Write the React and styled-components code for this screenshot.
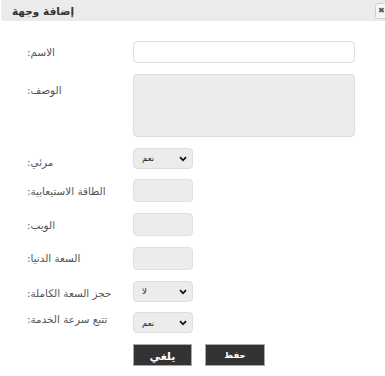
import React from "react";
import styled, { createGlobalStyle } from "styled-components";

const GlobalStyle = createGlobalStyle`
  html, body {
    margin: 0;
    padding: 0;
    background: #fff;
  }
  body {
    font-family: "DejaVu Sans", Tahoma, sans-serif;
    font-size: 11px;
    color: #555;
  }
`;

const Dialog = styled.div`
  width: 385px;
  height: 376px;
  overflow: hidden;
`;

const TitleBar = styled.div`
  height: 21px;
  margin-left: 1px;
  background: #ebebeb;
  border-bottom-left-radius: 4px;
  display: flex;
  align-items: center;
  justify-content: space-between;
  padding-left: 11px;
`;

const Title = styled.span`
  font-size: 10.5px;
  font-weight: bold;
  color: #333;
`;

const CloseBox = styled.button`
  width: 14px;
  height: 16px;
  margin-right: -4px;
  padding: 0 0 0 2px;
  border: 1px solid #cfcfcf;
  border-radius: 3px;
  background: #f6f6f6;
  color: #555;
  font-size: 8px;
  line-height: 14px;
  text-align: left;
  overflow: hidden;
`;

const Form = styled.div`
  display: grid;
  grid-template-columns: 106px 222px;
  row-gap: 10.75px;
  padding: 20px 0 0 27px;
`;

const Label = styled.div`
  display: flex;
  direction: ltr;
  justify-self: start;
  align-self: ${(p) => (p.$top ? "start" : "center")};
  padding-top: ${(p) => p.$offset || 0}px;
  font-size: 10.4px;
  color: #555;
  white-space: nowrap;
`;

const LabelText = styled.span`
  direction: rtl;
  unicode-bidi: isolate;
`;

const TextInput = styled.input`
  box-sizing: border-box;
  width: ${(p) => (p.$wide ? "222px" : "60px")};
  height: ${(p) => p.$h || 23}px;
  border: 1px solid ${(p) => (p.$wide ? "#dcdcdc" : "#e0e0e0")};
  border-radius: 4px;
  background: ${(p) => (p.$wide ? "#fff" : "#ececec")};
  margin: 0;
  outline: none;
`;

const TextArea = styled.textarea`
  box-sizing: border-box;
  width: 222px;
  height: 63px;
  border: 1px solid #dedede;
  border-radius: 4px;
  background: #ececec;
  margin: 0;
  resize: none;
  outline: none;
`;

const SelectWrap = styled.div`
  position: relative;
  width: 60px;
  height: 21px;
`;

const Select = styled.select`
  appearance: none;
  box-sizing: border-box;
  width: 60px;
  height: 21px;
  margin: 0;
  padding: 0 0 0 8px;
  border: 1px solid #dedede;
  border-radius: 4px;
  background: #ececec;
  font-family: "DejaVu Sans", sans-serif;
  font-size: 8.5px;
  color: #222;
  outline: none;
`;

const Chevron = styled.svg`
  position: absolute;
  right: 6px;
  top: 8px;
  width: 8px;
  height: 6px;
  pointer-events: none;
`;

const Buttons = styled.div`
  grid-column: 2;
  display: flex;
  gap: 13px;
`;

const Button = styled.button`
  box-sizing: border-box;
  width: ${(p) => p.$w}px;
  height: 22px;
  margin: 0;
  border: 1px solid #a8a8a8;
  background: #333;
  color: #fff;
  font-family: "DejaVu Sans", sans-serif;
  font-weight: bold;
  font-size: ${(p) => p.$size}px;
  padding: ${(p) => p.$pad || 0}px 0 0;
  cursor: pointer;
`;

function FieldLabel({ children, ...rest }) {
  return (
    <Label {...rest}>
      <span>:</span>
      <LabelText>{children}</LabelText>
    </Label>
  );
}

function YesNo({ value }) {
  return (
    <SelectWrap>
      <Select defaultValue={value}>
        <option value="نعم">نعم</option>
        <option value="لا">لا</option>
      </Select>
      <Chevron viewBox="0 0 8 6">
        <path d="M1 1.2 L4 4.3 L7 1.2" fill="none" stroke="#111" strokeWidth="1.8" />
      </Chevron>
    </SelectWrap>
  );
}

export default function App() {
  return (
    <Dialog>
      <GlobalStyle />
      <TitleBar>
        <Title>إضافة وجهة</Title>
        <CloseBox>✖</CloseBox>
      </TitleBar>
      <Form>
        <FieldLabel>الاسم</FieldLabel>
        <TextInput $wide $h={22} />

        <FieldLabel $top $offset={10}>الوصف</FieldLabel>
        <TextArea />

        <FieldLabel $offset={8}>مرئي</FieldLabel>
        <YesNo value="نعم" />

        <FieldLabel>الطاقة الاستيعابية</FieldLabel>
        <TextInput />

        <FieldLabel>الويب</FieldLabel>
        <TextInput />

        <FieldLabel>السعة الدنيا</FieldLabel>
        <TextInput />

        <FieldLabel $offset={4}>حجز السعة الكاملة</FieldLabel>
        <YesNo value="لا" />

        <FieldLabel $top $offset={1}>تتبع سرعة الخدمة</FieldLabel>
        <YesNo value="نعم" />

        <Buttons>
          <Button $w={59} $size={11} $pad={3}>يلغي</Button>
          <Button $w={60} $size={8.5}>حفظ</Button>
        </Buttons>
      </Form>
    </Dialog>
  );
}
